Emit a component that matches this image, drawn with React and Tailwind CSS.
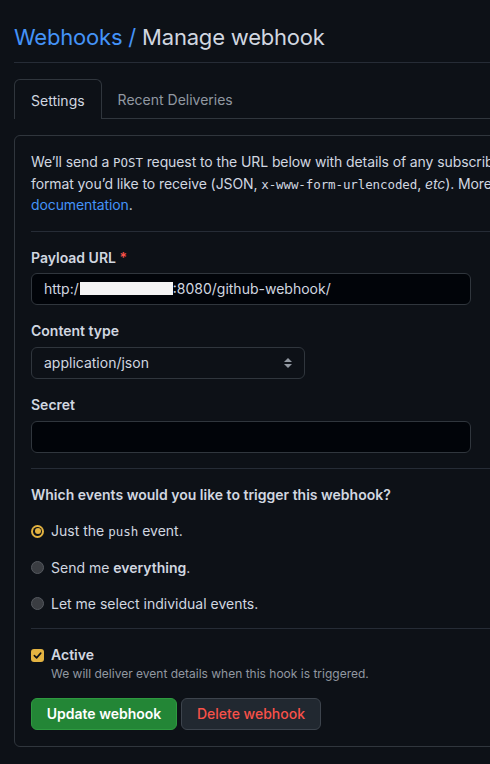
import React from 'react';

const mono = { fontFamily: '"DejaVu Sans Mono", monospace' };

const Radio = ({ checked }) =>
  checked ? (
    <span className="w-[13px] h-[13px] rounded-full bg-[#e3b341] flex items-center justify-center shrink-0">
      <span className="w-[9px] h-[9px] rounded-full bg-[#0d1117] flex items-center justify-center">
        <span className="w-[6px] h-[6px] rounded-full bg-[#e3b341]" />
      </span>
    </span>
  ) : (
    <span className="w-[13px] h-[13px] rounded-full bg-[#3a3d42] border border-[#55595f] shrink-0" />
  );

export default function App() {
  return (
    <div className="w-[490px] h-[764px] overflow-hidden bg-[#0d1117] text-[#d1d7e0] text-sm" style={{ fontFamily: 'Inter, "Noto Sans", sans-serif' }}>
      <div className="w-[760px] pl-[14px]">
        {/* header */}
        <div className="pt-[19px] pb-[7px] border-b border-[#262c36]">
          <h1 className="text-[22px] leading-[36px] font-normal tracking-[-0.2px]">
            <span className="text-[#4493f8]">Webhooks /</span> <span className="text-[#d1d7e0]">Manage webhook</span>
          </h1>
        </div>

        {/* tabs */}
        <div className="mt-4 flex border-b border-[#30363d] h-[40px]">
          <div className="px-4 h-[40px] flex items-center pt-[2px] border border-[#30363d] border-b-0 rounded-t-md bg-[#0d1117] text-[#d1d7e0]">Settings</div>
          <div className="px-4 h-[40px] flex items-center pt-[2px] text-[#9198a1]">Recent Deliveries</div>
        </div>

        {/* box */}
        <div className="mt-[16px] border border-[#30363d] rounded-md p-4">
          <p className="leading-[20.5px] whitespace-nowrap tracking-[-0.1px]">
            We’ll send a <code className="text-[12.5px]" style={mono}>POST</code> request to the URL below with details of any subscribed events. You can also specify which data
            <br />
            format you’d like to receive (JSON, <code className="text-[12.5px]" style={mono}>x-www-form-urlencoded</code>, <em>etc</em>). More information can be found in
            <br />
            <span className="text-[#4493f8]">documentation</span>.
          </p>

          <hr className="mt-[15px] border-[#262c36]" />

          <div className="mt-4 font-semibold leading-5">
            Payload URL <span className="text-[#f85149]">*</span>
          </div>
          <div className="mt-[5px] w-[440px] h-[32px] rounded-md border border-[#30363d] bg-[#010409] flex items-center pl-3">
            <span>http:/</span>
            <span className="ml-[1px] w-[93px] h-[13px] bg-[#f4f4f4]" />
            <span>:8080/github-webhook/</span>
          </div>

          <div className="mt-4 font-semibold leading-5">Content type</div>
          <div className="mt-[6px] w-[274px] h-[32px] rounded-md border border-[#30363d] bg-[#0d1117] flex items-center justify-between pl-3 pr-3">
            <span>application/json</span>
            <span className="flex flex-col items-center gap-[2px]">
              <span className="w-0 h-0 border-l-[4px] border-r-[4px] border-b-[4px] border-l-transparent border-r-transparent border-b-[#9198a1]" />
              <span className="w-0 h-0 border-l-[4px] border-r-[4px] border-t-[4px] border-l-transparent border-r-transparent border-t-[#9198a1]" />
            </span>
          </div>

          <div className="mt-4 font-semibold leading-5">Secret</div>
          <div className="mt-[6px] w-[440px] h-[32px] rounded-md border border-[#30363d] bg-[#010409]" />

          <hr className="mt-[15px] border-[#262c36]" />

          <div className="mt-4 font-semibold leading-5">Which events would you like to trigger this webhook?</div>
          <div className="mt-4 flex flex-col gap-4">
            <label className="flex items-center gap-[7px] leading-5">
              <Radio checked />
              <span>
                Just the <code className="text-[12.5px]" style={mono}>push</code> event.
              </span>
            </label>
            <label className="flex items-center gap-[7px] leading-5">
              <Radio />
              <span>
                Send me <b className="font-semibold">everything</b>.
              </span>
            </label>
            <label className="flex items-center gap-[7px] leading-5">
              <Radio />
              <span>Let me select individual events.</span>
            </label>
          </div>

          <hr className="mt-[14px] border-[#262c36]" />

          <div className="mt-4 flex gap-[7px]">
            <span className="mt-[4px] w-[13px] h-[13px] rounded-[3px] bg-[#e3b341] flex items-center justify-center shrink-0">
              <svg width="9" height="9" viewBox="0 0 10 10" fill="none">
                <path d="M1.5 5.2 L4 7.6 L8.6 2.4" stroke="#0d1117" strokeWidth="1.8" strokeLinecap="round" strokeLinejoin="round" />
              </svg>
            </span>
            <div>
              <div className="font-semibold leading-5">Active</div>
              <div className="text-xs leading-[17px] text-[#9198a1]">We will deliver event details when this hook is triggered.</div>
            </div>
          </div>

          <div className="mt-[16px] flex gap-[4px]">
            <button className="h-[32px] w-[146px] rounded-md bg-[#238636] border border-[#2e9a40] text-white font-semibold">Update webhook</button>
            <button className="h-[32px] w-[140px] rounded-md bg-[#212830] border border-[#3d444d] text-[#f85149] font-medium">Delete webhook</button>
          </div>
        </div>
      </div>
    </div>
  );
}
